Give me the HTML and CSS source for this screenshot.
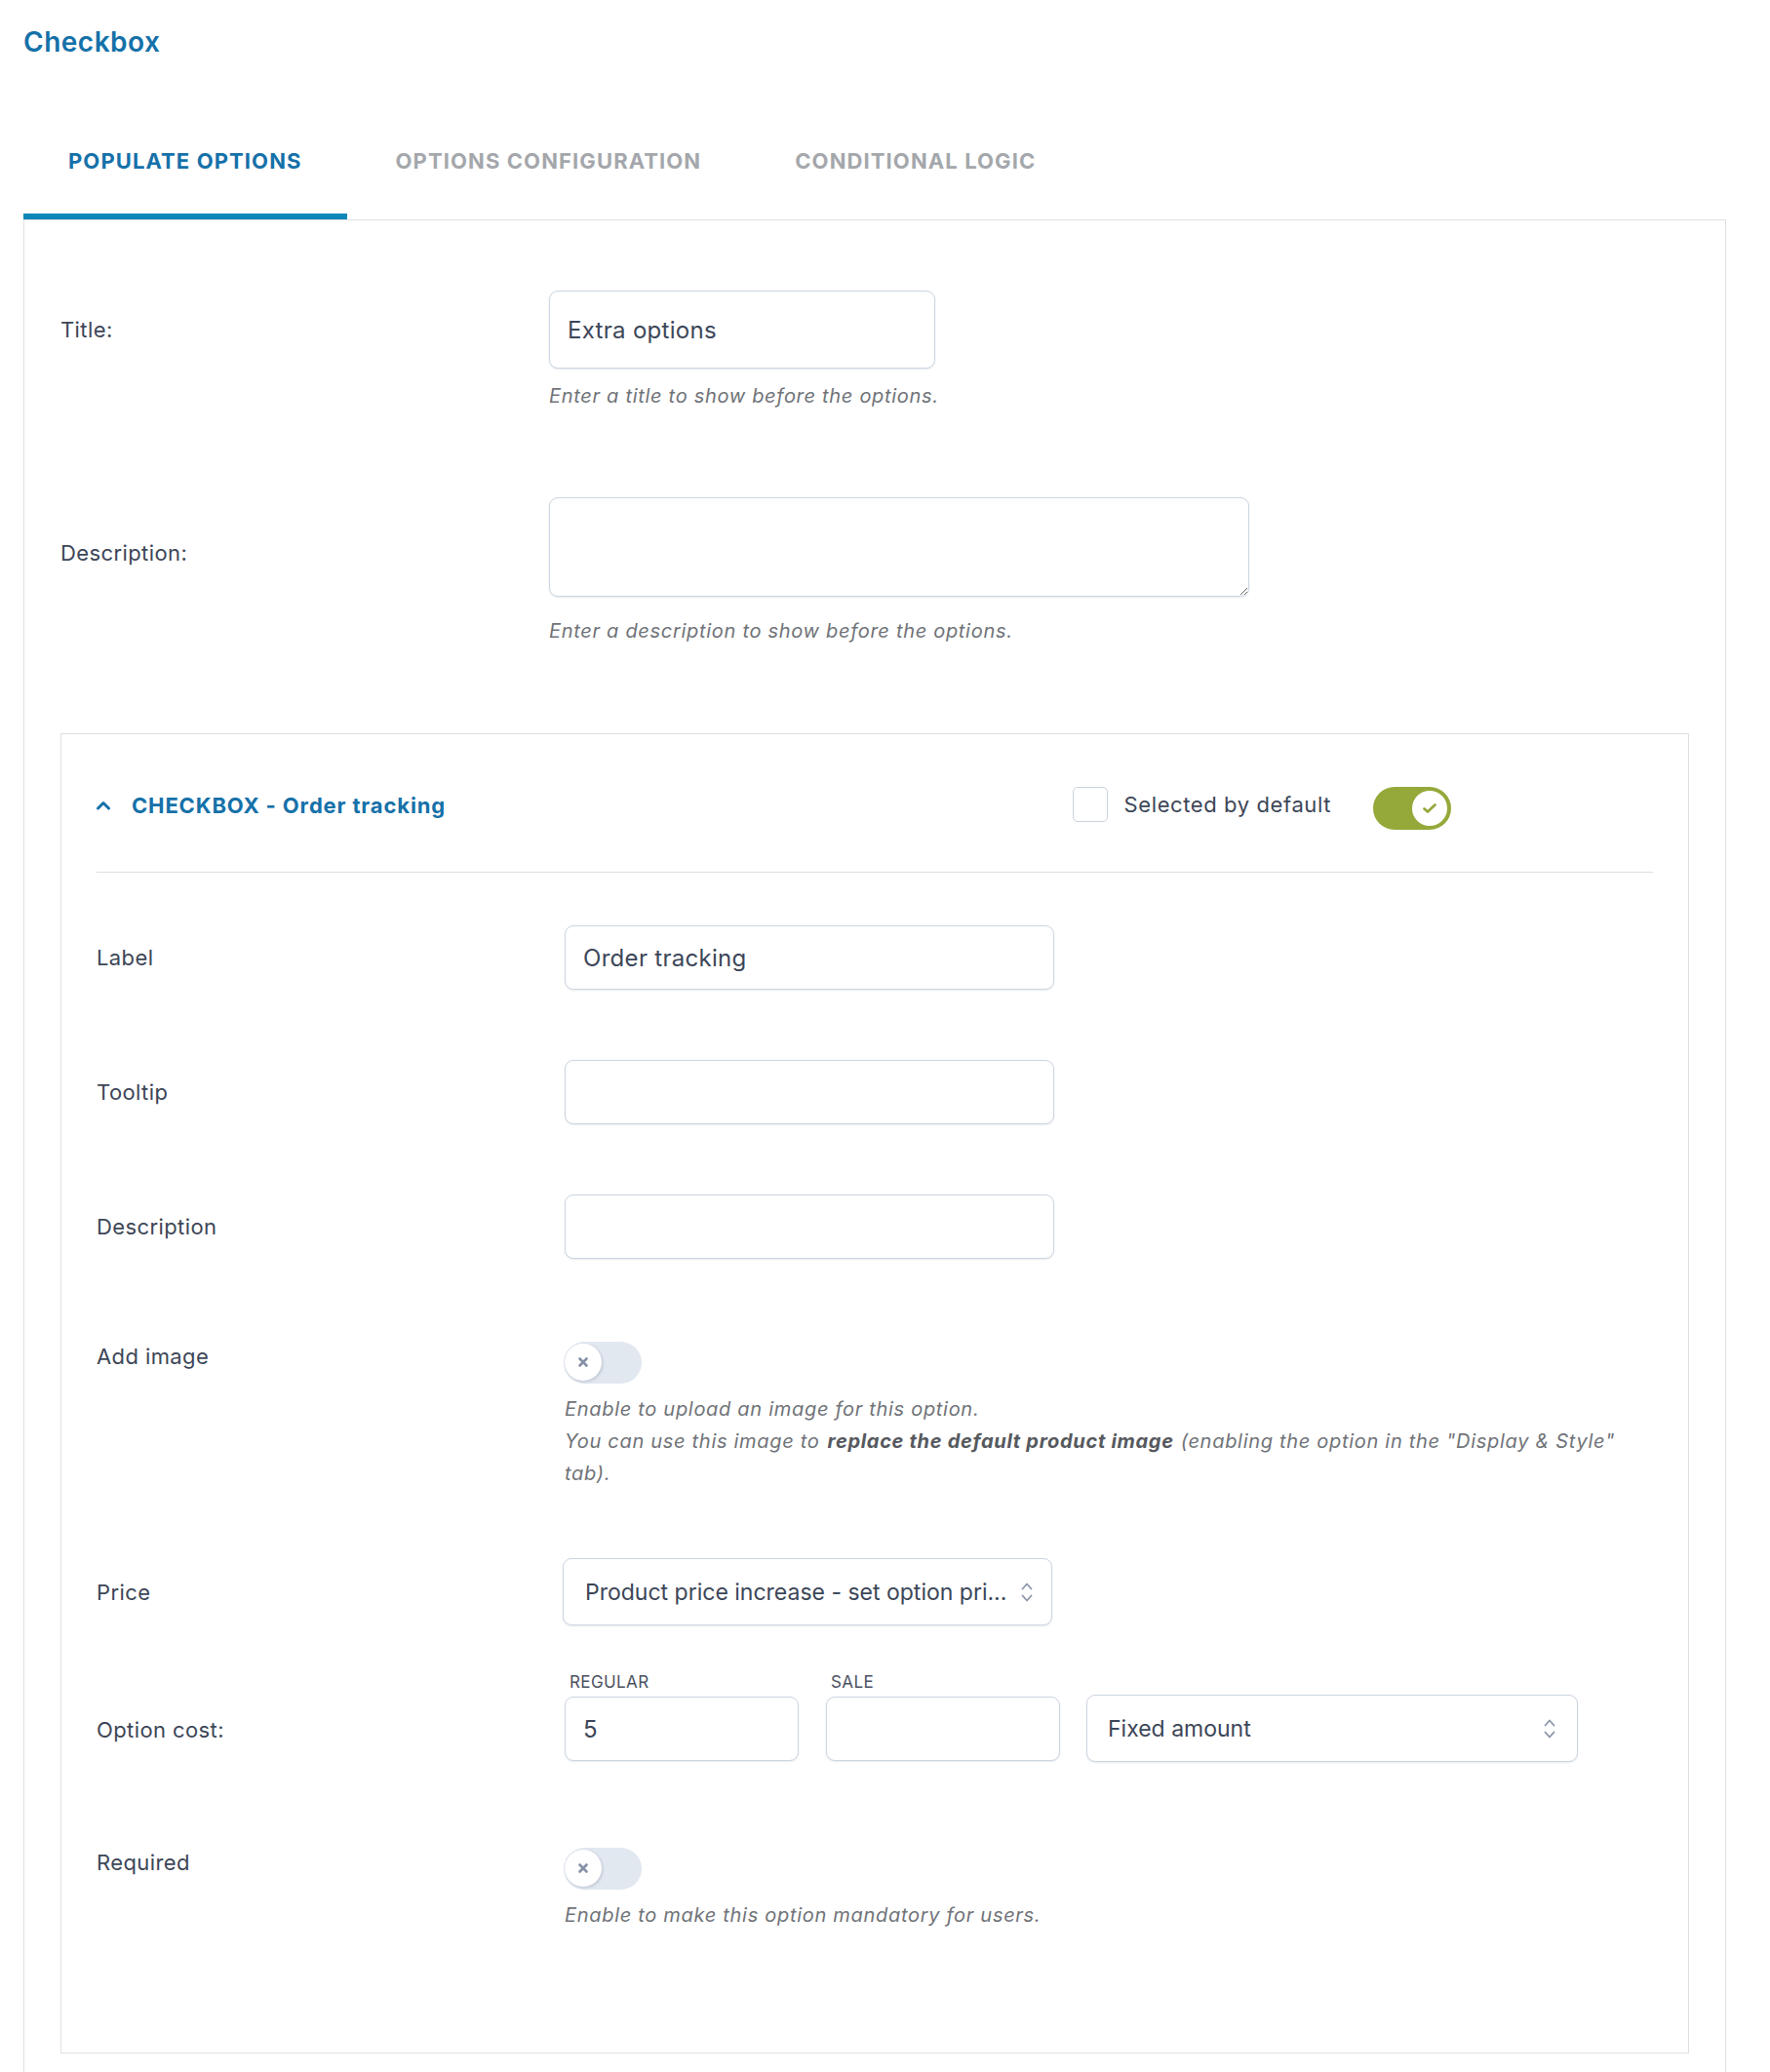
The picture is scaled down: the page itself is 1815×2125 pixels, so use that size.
FILE: index.html
```html
<!DOCTYPE html>
<html lang="en">
<head>
<meta charset="utf-8">
<title>Checkbox</title>
<link rel="stylesheet" href="styles.css">
</head>
<body>
<h1 class="page-title">Checkbox</h1>

<nav class="tabs">
  <a class="tab tab-active">POPULATE OPTIONS</a>
  <a class="tab">OPTIONS CONFIGURATION</a>
  <a class="tab">CONDITIONAL LOGIC</a>
</nav>

<div class="panel">
  <div class="row row-title">
    <label class="row-label lbl-title">Title:</label>
    <div class="row-control">
      <div class="input input-title">Extra options</div>
      <p class="hint hint-title">Enter a title to show before the options.</p>
    </div>
  </div>

  <div class="row row-desc">
    <label class="row-label lbl-desc">Description:</label>
    <div class="row-control">
      <textarea class="textarea"></textarea>
      <p class="hint hint-desc">Enter a description to show before the options.</p>
    </div>
  </div>

  <div class="option-box">
    <div class="option-head">
      <div class="option-name">
        <svg class="chevron" width="16" height="10" viewBox="0 0 16 10"><path d="M2.5 8 L8 2.5 L13.5 8" fill="none" stroke="#1571a9" stroke-width="3" stroke-linecap="round" stroke-linejoin="round"/></svg>
        <span>CHECKBOX - Order tracking</span>
      </div>
      <div class="option-actions">
        <span class="checkbox"></span>
        <span class="selected-text">Selected by default</span>
        <span class="toggle toggle-on">
          <span class="knob">
            <svg width="16" height="12" viewBox="0 0 16 12"><path d="M2.5 6.5 L6 9.5 L13.5 2.5" fill="none" stroke="#94a93a" stroke-width="2.8" stroke-linecap="round" stroke-linejoin="round"/></svg>
          </span>
        </span>
      </div>
    </div>

    <div class="option-body">
      <div class="orow orow-input orow-label">
        <label class="o-label">Label</label>
        <div class="input input-sm">Order tracking</div>
      </div>
      <div class="orow orow-input orow-next">
        <label class="o-label">Tooltip</label>
        <div class="input input-sm"></div>
      </div>
      <div class="orow orow-input orow-next">
        <label class="o-label">Description</label>
        <div class="input input-sm"></div>
      </div>

      <div class="orow orow-toggle orow-image">
        <label class="o-label">Add image</label>
        <div class="o-control">
          <span class="toggle toggle-off">
            <span class="knob">
              <svg width="12" height="12" viewBox="0 0 12 12"><path d="M2.5 2.5 L9.5 9.5 M9.5 2.5 L2.5 9.5" fill="none" stroke="#8590a6" stroke-width="2.6" stroke-linecap="round"/></svg>
            </span>
          </span>
          <p class="hint hint-toggle">Enable to upload an image for this option.<br>You can use this image to<b>replace the default product image</b>(enabling the option in the "Display &amp; Style" tab).</p>
        </div>
      </div>

      <div class="orow orow-input orow-price">
        <label class="o-label">Price</label>
        <div class="select select-price">
          <span class="select-text">Product price increase - set option pri...</span>
          <svg class="updown" width="14" height="26" viewBox="0 0 14 26"><path d="M2.5 9.5 L7 4.5 L11.5 9.5 M2.5 16.5 L7 21.5 L11.5 16.5" fill="none" stroke="#8c96a8" stroke-width="1.8" stroke-linecap="round" stroke-linejoin="round"/></svg>
        </div>
      </div>

      <div class="orow orow-cost">
        <label class="o-label lbl-cost">Option cost:</label>
        <div class="cost-fields">
          <div class="cost-field">
            <span class="sub-label">REGULAR</span>
            <div class="input input-cost">5</div>
          </div>
          <div class="cost-field">
            <span class="sub-label">SALE</span>
            <div class="input input-cost"></div>
          </div>
          <div class="select select-type">
            <span class="select-text">Fixed amount</span>
            <svg class="updown" width="14" height="26" viewBox="0 0 14 26"><path d="M2.5 9.5 L7 4.5 L11.5 9.5 M2.5 16.5 L7 21.5 L11.5 16.5" fill="none" stroke="#8c96a8" stroke-width="1.8" stroke-linecap="round" stroke-linejoin="round"/></svg>
          </div>
        </div>
      </div>

      <div class="orow orow-toggle orow-required">
        <label class="o-label">Required</label>
        <div class="o-control">
          <span class="toggle toggle-off">
            <span class="knob">
              <svg width="12" height="12" viewBox="0 0 12 12"><path d="M2.5 2.5 L9.5 9.5 M9.5 2.5 L2.5 9.5" fill="none" stroke="#8590a6" stroke-width="2.6" stroke-linecap="round"/></svg>
            </span>
          </span>
          <p class="hint hint-toggle">Enable to make this option mandatory for users.</p>
        </div>
      </div>
    </div>
  </div>
</div>
</body>
</html>
```

FILE: styles.css
```css
* { box-sizing: border-box; }

html, body { background: #ffffff; }

body {
  margin: 0;
  padding: 0 45px 0 24px;
  font-family: Inter, "Open Sans", "Liberation Sans", sans-serif;
  color: #3d4657;
}

.page-title {
  margin: 26px 0 0;
  font-size: 28px;
  line-height: 34px;
  font-weight: 600;
  letter-spacing: 0.5px;
  color: #1571a9;
}

.tabs {
  display: flex;
  margin-top: 52px;
}

.tab {
  display: block;
  padding: 40px 46px 40px;
  border-bottom: 6px solid transparent;
  font-size: 22px;
  line-height: 27px;
  font-weight: 700;
  letter-spacing: 1.1px;
  color: #a4a7ab;
  white-space: nowrap;
}

.tab + .tab { padding-left: 50px; }

.tab-active {
  color: #1571a9;
  border-bottom-color: #0e86b9;
}

.panel {
  border: 1px solid #dfe0e2;
  padding: 0 37px 60px;
}

.row {
  display: grid;
  grid-template-columns: 501px 1fr;
}

.row-label {
  font-size: 22px;
  line-height: 30px;
  letter-spacing: 0.4px;
}

.row-title { margin-top: 72px; }
.lbl-title { padding-top: 25px; }
.row-desc { margin-top: 89px; }
.lbl-desc { padding-top: 42px; }

.input {
  display: flex;
  align-items: center;
  background: #fff;
  border: 1px solid #ccd5e2;
  border-radius: 9px;
  box-shadow: 0 1px 2px rgba(30, 50, 80, 0.10);
  font-size: 24px;
  letter-spacing: 0.3px;
  color: #3c4658;
  padding: 0 18px;
}

.input-title {
  width: 396px;
  height: 80px;
}

.textarea {
  display: block;
  width: 718px;
  height: 102px;
  margin: 0;
  border: 1px solid #ccd5e2;
  border-radius: 9px;
  box-shadow: 0 1px 2px rgba(30, 50, 80, 0.10);
  resize: vertical;
  font-family: inherit;
}

.hint {
  margin: 0;
  font-size: 20px;
  line-height: 30px;
  letter-spacing: 0.7px;
  font-style: italic;
  color: #707378;
}

.hint-title { margin-top: 13px; }
.hint-desc { margin-top: 20px; }

.hint b {
  font-weight: 700;
  color: #56595e;
  margin: 0 7px 0 8px;
}

/* option box */
.option-box {
  margin-top: 90px;
  border: 1px solid #dfe0e2;
  padding: 0 36px 124px;
}

.option-head {
  display: flex;
  align-items: center;
  justify-content: space-between;
  padding: 54px 207px 43px 0;
  border-bottom: 1px solid #dfe0e2;
}

.option-name {
  display: flex;
  align-items: center;
  font-size: 22px;
  line-height: 30px;
  font-weight: 700;
  color: #1571a9;
  letter-spacing: 0.85px;
  margin-top: -6px;
}

.chevron {
  margin-left: -1px;
  margin-right: 21px;
}

.option-actions {
  display: flex;
  align-items: center;
}

.checkbox {
  width: 36px;
  height: 36px;
  border: 1px solid #c9d2de;
  border-radius: 5px;
  background: #fff;
  margin-top: -8px;
}

.selected-text {
  margin-left: 17px;
  margin-right: 43px;
  font-size: 22px;
  line-height: 30px;
  letter-spacing: 0.6px;
  color: #3d4657;
  margin-top: -8px;
}

.toggle {
  position: relative;
  display: block;
  width: 80px;
  height: 44px;
  border-radius: 22px;
}

.toggle-on {
  background: #94a93a;
}

.toggle-on .knob {
  position: absolute;
  right: 4px;
  top: 4px;
  width: 36px;
  height: 36px;
  border-radius: 50%;
  background: #fff;
  display: flex;
  align-items: center;
  justify-content: center;
}

.toggle-off {
  background: #e2e8f0;
  height: 43px;
}

.toggle-off .knob {
  position: absolute;
  left: 1px;
  top: 2px;
  width: 38px;
  height: 38px;
  border-radius: 50%;
  background: #fff;
  box-shadow: 1px 1px 3px rgba(40, 60, 90, 0.22);
  display: flex;
  align-items: center;
  justify-content: center;
}

.option-body {
  padding-top: 54px;
}

.orow {
  display: grid;
  grid-template-columns: 480px 1fr;
}

.orow-input { align-items: center; }

.o-label {
  font-size: 22px;
  line-height: 30px;
  letter-spacing: 0.4px;
  color: #3d4657;
}

.input-sm {
  width: 502px;
  height: 66px;
}

.orow-next { margin-top: 72px; }
.orow-image { margin-top: 85px; }
.orow-price { margin-top: 70px; }
.orow-cost { margin-top: 48px; }
.orow-required { margin-top: 89px; }

.orow-toggle { align-items: start; }

.o-control .toggle { margin-left: -1px; }

.hint-toggle {
  margin-top: 10px;
  line-height: 33px;
}

.select {
  display: flex;
  align-items: center;
  justify-content: space-between;
  background: #fff;
  border: 1px solid #ccd5e2;
  border-radius: 9px;
  box-shadow: 0 1px 2px rgba(30, 50, 80, 0.10);
  font-size: 23px;
  letter-spacing: 0;
  color: #3c4658;
  height: 69px;
}

.select-price {
  width: 502px;
  padding: 0 18px 0 22px;
  margin-left: -2px;
}

.select-text {
  white-space: nowrap;
  overflow: hidden;
  min-width: 0;
}

.updown { flex: none; }

.lbl-cost { padding-top: 44px; }

.cost-fields {
  display: flex;
  align-items: flex-end;
}

.cost-field {
  display: flex;
  flex-direction: column;
}

.cost-field + .cost-field { margin-left: 28px; }

.sub-label {
  font-size: 17px;
  line-height: 20px;
  color: #4b5262;
  padding-left: 5px;
  margin-bottom: 5px;
  letter-spacing: 0.4px;
}

.input-cost {
  width: 240px;
  height: 66px;
}

.select-type {
  width: 504px;
  margin-left: 27px;
  margin-bottom: -1px;
  padding: 0 21px 0 21px;
}
```
